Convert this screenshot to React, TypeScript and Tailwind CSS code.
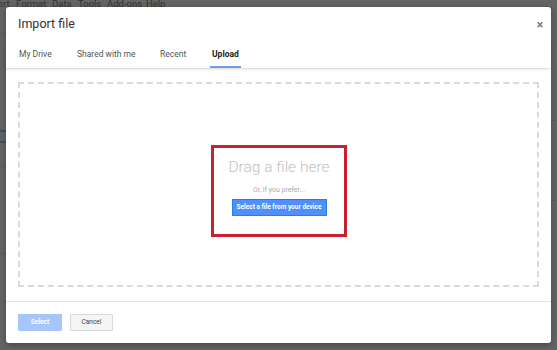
import React from "react";

export default function App() {
  const font = { fontFamily: "Roboto, 'Liberation Sans', Arial, sans-serif" };
  return (
    <div
      className="relative w-[557px] h-[350px] overflow-hidden bg-[#646464]"
      style={font}
    >
      {/* background app menu (behind overlay) */}
      <div className="flex items-center h-[10px] -mt-[1px] -ml-[2px] text-[9.5px] leading-none text-[#333]">
        <span className="w-[18px]">ert</span>
        <span className="w-[36px]">Format</span>
        <span className="w-[26px]">Data</span>
        <span className="w-[29px]">Tools</span>
        <span className="w-[39px]">Add-ons</span>
        <span>Help</span>
      </div>
      {/* faint sheet lines at the edges */}
      <div className="absolute left-0 top-[130px] w-[6px] h-[2px] bg-[#3f4f63]" />
      <div className="absolute left-0 top-[141px] w-[6px] h-[2px] bg-[#3f4f63]" />
      <div className="absolute left-0 top-[33px] w-[6px] h-px bg-[#5a5a5a]" />
      <div className="absolute left-0 top-[166px] w-[6px] h-px bg-[#5a5a5a]" />
      <div className="absolute left-0 top-[253px] w-[6px] h-px bg-[#5a5a5a]" />
      <div className="absolute right-0 top-[120px] w-[6px] h-px bg-[#5a5a5a]" />
      <div className="absolute right-0 top-[200px] w-[6px] h-px bg-[#5a5a5a]" />

      {/* dialog */}
      <div className="absolute left-[6px] top-[7px] w-[545px] h-[336px] bg-white rounded-[3px] shadow-[0_2px_6px_rgba(0,0,0,0.3)] flex flex-col">
        {/* header */}
        <div className="flex items-center justify-between h-[34px] pl-[12px] pr-[8px] pt-[1px]">
          <span className="text-[12.5px] text-[#333]">Import file</span>
          <span className="text-[12px] leading-none text-[#777] font-bold">×</span>
        </div>
        {/* tabs */}
        <div className="flex h-[28px] border-b border-[#e0e0e0] shadow-[0_1px_2px_rgba(0,0,0,0.08)] text-[8.5px] text-[#555]">
          <div className="flex items-center pl-[13px] w-[71px]">My Drive</div>
          <div className="flex items-center w-[83px]">Shared with me</div>
          <div className="flex items-center w-[52px]">Recent</div>
          <div className="relative flex items-center font-bold text-[#222]">
            <span>Upload</span>
            <div className="absolute -left-[2px] -right-[2px] bottom-0 h-[2px] bg-[#6f9fdf]" />
          </div>
        </div>
        {/* drop area */}
        <div className="px-[12px] pt-[13px]">
          <div className="h-[205px] border-[2px] border-dashed border-[#dadada] flex items-center justify-center">
            <div className="w-[136px] h-[92px] ml-[1px] mt-[12px] border-[3px] border-[#c8202f] flex flex-col items-center pt-[12px]">
              <div className="text-[15.5px] leading-none text-[#c0c0c0] font-light">Drag a file here</div>
              <div className="mt-[12px] text-[7px] leading-none text-[#aaa]">Or, if you prefer...</div>
              <div className="mt-[5px] w-[95px] h-[17px] bg-[#4d90fe] border border-[#3079ed] flex items-center justify-center text-[6.5px] font-bold text-white">
                Select a file from your device
              </div>
            </div>
          </div>
        </div>
        {/* footer */}
        <div className="mt-[14px] border-t border-[#e5e5e5] flex gap-[8px] pl-[12px] pt-[12px]">
          <div className="w-[44px] h-[17px] bg-[#a6c5fa] flex items-center justify-center text-[6.5px] font-bold text-white rounded-[1px]">
            Select
          </div>
          <div className="w-[43px] h-[17px] bg-[#f5f5f5] border border-[#d9d9d9] flex items-center justify-center text-[6.5px] text-[#444] rounded-[1px]">
            Cancel
          </div>
        </div>
      </div>
    </div>
  );
}
